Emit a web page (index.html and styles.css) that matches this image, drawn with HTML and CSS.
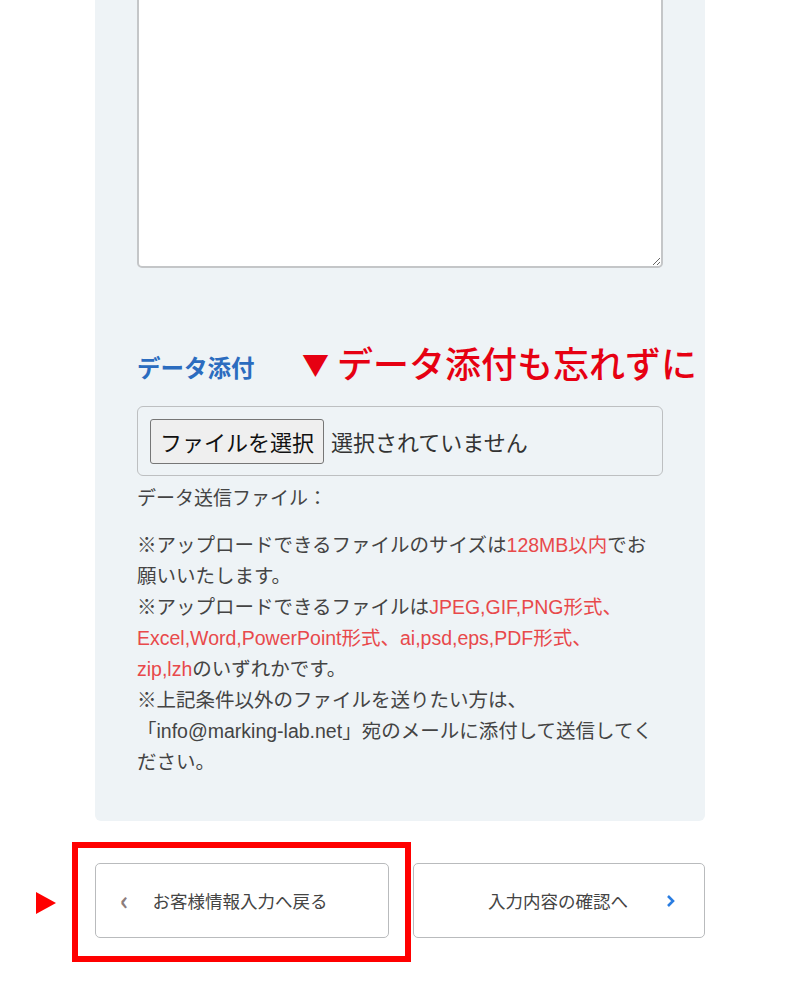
FILE: index.html
```html
<!DOCTYPE html>
<html lang="ja">

<head>
    <meta charset="UTF-8">
    <title>お問い合わせ</title>
    <meta name="viewport" content="width=device-width, initial-scale=1.0">
    <link rel="stylesheet" href="styles.css">
</head>

<body>
    <div class="panel">
        <textarea class="message"></textarea>

        <div class="attach-row">
            <span class="attach-label">データ添付</span>
            <span class="reminder"><span class="mark">▼</span> データ添付も忘れずに</span>
        </div>

        <div class="file-box">
            <span class="file-btn">ファイルを選択</span>
            <span class="file-none">選択されていません</span>
        </div>

        <p class="file-caption">データ送信ファイル：</p>

        <p class="notes">
            ※アップロードできるファイルのサイズは<span class="hl">128MB以内</span>でお願いいたします。<br>
            ※アップロードできるファイルは<span class="hl">JPEG,GIF,PNG形式、<br>Excel,Word,PowerPoint形式、ai,psd,eps,PDF形式、<br>zip,lzh</span>のいずれかです。<br>
            ※上記条件以外のファイルを送りたい方は、<br>
            「info@marking-lab.net」宛のメールに添付して送信してください。
        </p>
    </div>

    <div class="nav-row">
        <span class="pointer"></span>
        <span class="highlight-box"></span>
        <a class="nav-btn back" href="#">
            <span class="chev back-chev">‹</span>
            お客様情報入力へ戻る
        </a>
        <a class="nav-btn next" href="#">
            入力内容の確認へ
            <svg class="next-chev" width="10" height="14" viewBox="0 0 10 14">
                <path d="M2 2 L7 7 L2 12" fill="none" stroke="#2a7de1" stroke-width="2.6" />
            </svg>
        </a>
    </div>
</body>

</html>
```

FILE: styles.css
```css
body {
    margin: 0;
    padding-bottom: 80px;
    background: #fff;
    font-family: "Liberation Sans", "Noto Sans CJK JP", sans-serif;
    color: #333;
}

.panel {
    margin: -60px 0 0 95px;
    width: 610px;
    box-sizing: border-box;
    background: #eef3f6;
    border-radius: 0 0 6px 6px;
    padding: 0 42px 43px;
}

.message {
    display: block;
    width: 526px;
    height: 328px;
    box-sizing: border-box;
    border: 2px solid #c4c6c8;
    border-radius: 5px;
    background: #fff;
    resize: vertical;
}

.attach-row {
    display: flex;
    align-items: center;
    margin-top: 72px;
    height: 45px;
}

.attach-label {
    flex-shrink: 0;
    color: #2b6cbf;
    font-family: "Noto Sans CJK JP", sans-serif;
    font-weight: bold;
    font-size: 23.5px;
    margin-top: 9px;
    width: 165px;
}

.reminder {
    flex-shrink: 0;
    color: #e60012;
    font-family: "Noto Sans CJK JP", sans-serif;
    font-size: 36px;
    font-weight: 500;
    white-space: nowrap;
    margin-top: -2px;
}

.reminder .mark {
    font-size: 27px;
    vertical-align: 3px;
}

.file-box {
    display: flex;
    align-items: center;
    gap: 7px;
    margin-top: 21px;
    height: 70px;
    box-sizing: border-box;
    border: 1.5px solid #bdbfc1;
    border-radius: 6px;
    padding: 0 12px;
    font-family: "Noto Sans CJK JP", sans-serif;
    font-size: 22px;
}

.file-btn {
    display: flex;
    align-items: center;
    height: 45px;
    box-sizing: border-box;
    padding: 0 9px;
    background: #efefef;
    border: 1.5px solid #767676;
    border-radius: 3px;
    color: #111;
}

.file-none {
    color: #333;
}

.file-caption {
    margin: 6px 0 0;
    font-family: "Noto Sans CJK JP", sans-serif;
    font-size: 19px;
    line-height: 30px;
    color: #444;
}

.notes {
    margin: 18px 0 0;
    font-size: 19.5px;
    line-height: 31px;
    color: #444;
}

.hl {
    color: #e8494b;
}

.nav-row {
    position: relative;
    display: flex;
    gap: 24px;
    margin: 42px 0 0 95px;
    width: 610px;
}

.nav-btn {
    display: flex;
    align-items: center;
    width: 294px;
    height: 75px;
    box-sizing: border-box;
    border: 1.5px solid #b9bbbd;
    border-radius: 5px;
    background: #fff;
    color: #444;
    font-family: "Noto Sans CJK JP", sans-serif;
    font-size: 17.5px;
    text-decoration: none;
}

.nav-btn.back {
    padding-left: 24px;
}

.nav-btn.next {
    width: 292px;
    justify-content: flex-end;
    padding-right: 28px;
}

.back-chev {
    color: #8c7d7b;
    font-size: 26px;
    font-weight: bold;
    margin: -4px 24px 0 0;
}

.next-chev {
    margin-left: 38px;
}

.highlight-box {
    position: absolute;
    left: -23px;
    top: -21px;
    width: 339px;
    height: 120px;
    box-sizing: border-box;
    border: 6px solid #f00;
}

.pointer {
    position: absolute;
    left: -59px;
    top: 29px;
    width: 0;
    height: 0;
    border-top: 11.5px solid transparent;
    border-bottom: 11.5px solid transparent;
    border-left: 20px solid #f00;
}
```
